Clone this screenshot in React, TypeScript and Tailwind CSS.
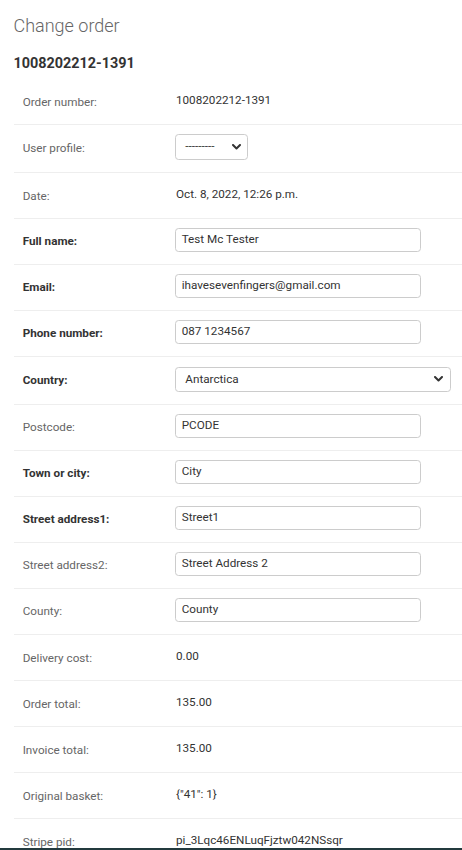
import React from "react";

type Kind = "text" | "input" | "select" | "country";

type Field = {
  label: string;
  value: string;
  kind: Kind;
  required?: boolean;
};

const fields: Field[] = [
  { label: "Order number:", value: "1008202212-1391", kind: "text" },
  { label: "User profile:", value: "---------", kind: "select" },
  { label: "Date:", value: "Oct. 8, 2022, 12:26 p.m.", kind: "text" },
  { label: "Full name:", value: "Test Mc Tester", kind: "input", required: true },
  { label: "Email:", value: "ihavesevenfingers@gmail.com", kind: "input", required: true },
  { label: "Phone number:", value: "087 1234567", kind: "input", required: true },
  { label: "Country:", value: "Antarctica", kind: "country", required: true },
  { label: "Postcode:", value: "PCODE", kind: "input" },
  { label: "Town or city:", value: "City", kind: "input", required: true },
  { label: "Street address1:", value: "Street1", kind: "input", required: true },
  { label: "Street address2:", value: "Street Address 2", kind: "input" },
  { label: "County:", value: "County", kind: "input" },
  { label: "Delivery cost:", value: "0.00", kind: "text" },
  { label: "Order total:", value: "135.00", kind: "text" },
  { label: "Invoice total:", value: "135.00", kind: "text" },
  { label: "Original basket:", value: '{"41": 1}', kind: "text" },
  { label: "Stripe pid:", value: "pi_3Lqc46ENLuqFjztw042NSsqr", kind: "text" },
];

function Chevron() {
  return (
    <svg width="9" height="6" viewBox="0 0 9 6" className="shrink-0">
      <path d="M1 1l3.5 3.5L8 1" fill="none" stroke="#333" strokeWidth="2" strokeLinecap="round" strokeLinejoin="round" />
    </svg>
  );
}

function Row({ field }: { field: Field }) {
  const tall = field.kind === "select" || field.kind === "country";

  // label offsets differ a little per kind of widget in the row
  let labelPad = "pt-[16px]";
  if (field.kind === "input") labelPad = "pt-[15.5px]";
  if (tall) labelPad = "pt-[16px]";

  return (
    <div className={`flex border-b border-[#eee] pl-[9.2px] ${tall ? "h-[48px]" : "h-[46px]"}`}>
      <div
        className={`w-[153.3px] shrink-0 leading-[14px] ${labelPad} ${
          field.required ? "font-bold text-[#333]" : "text-[#666]"
        }`}
      >
        {field.label}
      </div>

      {field.kind === "text" && <div className="pt-[14px] leading-[14px] text-[#333]">{field.value}</div>}

      {field.kind === "input" && (
        <div className="mt-[9.3px] ml-[-0.7px] flex h-[24px] w-[246px] items-center rounded-[3.6px] border border-[#ccc] px-[5.4px] text-[#333]">
          {field.value}
        </div>
      )}

      {field.kind === "select" && (
        <div className="mt-[9.3px] ml-[-0.7px] flex h-[26px] w-[72.4px] items-center justify-between rounded-[3.6px] border border-[#ccc] pl-[9px] pr-[6px] text-[#333]">
          <span>{field.value}</span>
          <Chevron />
        </div>
      )}

      {field.kind === "country" && (
        <div className="mt-[9.7px] ml-[-0.7px] flex h-[25.6px] w-[275.4px] items-center justify-between rounded-[3.6px] border border-[#ccc] pl-[9px] pr-[7px] text-[#333]">
          <span>{field.value}</span>
          <Chevron />
        </div>
      )}
    </div>
  );
}

export default function App() {
  return (
    <div className="relative h-[850px] overflow-hidden bg-white font-['Roboto','Liberation_Sans',sans-serif] text-[11.7px]">
      <div className="pl-[13.5px] pt-[14.5px]">
        <h1 className="text-[18px] font-light leading-[22px] text-[#666]">Change order</h1>
        <h2 className="mt-[18px] text-[14.4px] font-bold leading-[18px] text-[#333]">1008202212-1391</h2>
        <div className="mt-[6.4px]">
          {fields.map((f) => (
            <Row key={f.label} field={f} />
          ))}
        </div>
      </div>
      <div className="absolute bottom-0 left-0 right-0 h-[2.5px] bg-[#233a3e]" />
    </div>
  );
}
